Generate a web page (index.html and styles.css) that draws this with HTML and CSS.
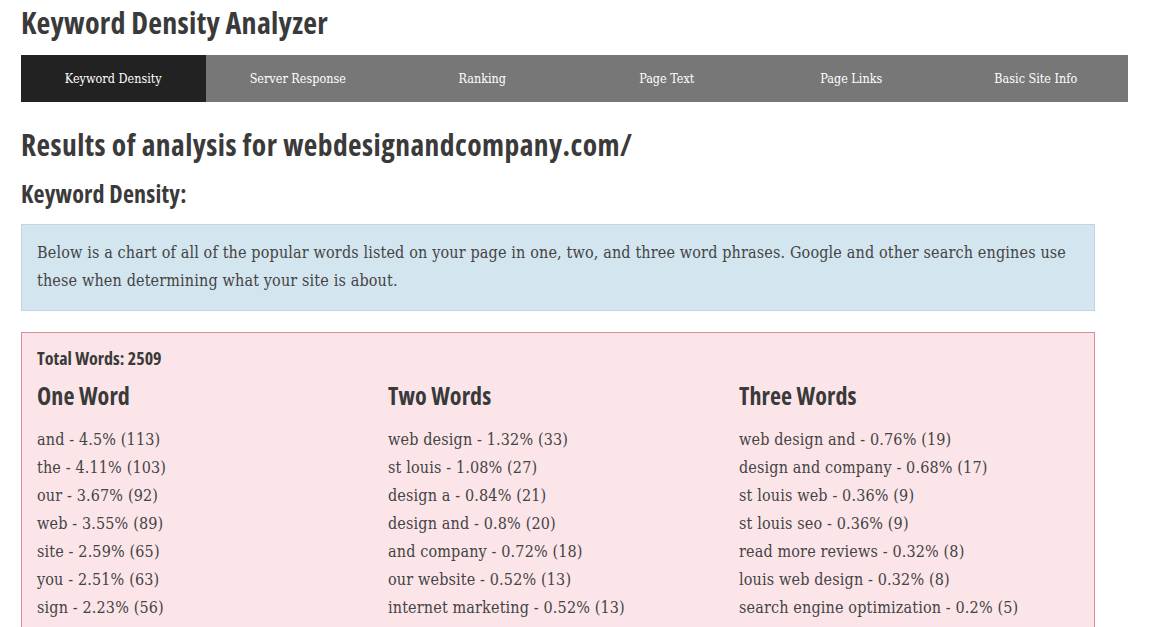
FILE: index.html
```html
<!DOCTYPE html>
<html>
<head>
<meta charset="utf-8">
<link rel="stylesheet" href="styles.css">
</head>
<body>
<div class="page">
  <h1 class="title">Keyword Density Analyzer</h1>
  <nav class="tabs">
    <a class="tab active">Keyword Density</a>
    <a class="tab">Server Response</a>
    <a class="tab">Ranking</a>
    <a class="tab">Page Text</a>
    <a class="tab">Page Links</a>
    <a class="tab">Basic Site Info</a>
  </nav>
  <h2 class="results">Results of analysis for webdesignandcompany.com/</h2>
  <h3 class="sub">Keyword Density:</h3>
  <div class="info">Below is a chart of all of the popular words listed on your page in one, two, and three word phrases. Google and other search engines use these when determining what your site is about.</div>
  <div class="danger">
    <div class="total">Total Words: 2509</div>
    <div class="cols">
      <div class="col">
        <h4 class="colhead">One Word</h4>
        <ul class="list">
          <li>and - 4.5% (113)</li>
          <li>the - 4.11% (103)</li>
          <li>our - 3.67% (92)</li>
          <li>web - 3.55% (89)</li>
          <li>site - 2.59% (65)</li>
          <li>you - 2.51% (63)</li>
          <li>sign - 2.23% (56)</li>
        </ul>
      </div>
      <div class="col">
        <h4 class="colhead">Two Words</h4>
        <ul class="list">
          <li>web design - 1.32% (33)</li>
          <li>st louis - 1.08% (27)</li>
          <li>design a - 0.84% (21)</li>
          <li>design and - 0.8% (20)</li>
          <li>and company - 0.72% (18)</li>
          <li>our website - 0.52% (13)</li>
          <li>internet marketing - 0.52% (13)</li>
        </ul>
      </div>
      <div class="col">
        <h4 class="colhead">Three Words</h4>
        <ul class="list">
          <li>web design and - 0.76% (19)</li>
          <li>design and company - 0.68% (17)</li>
          <li>st louis web - 0.36% (9)</li>
          <li>st louis seo - 0.36% (9)</li>
          <li>read more reviews - 0.32% (8)</li>
          <li>louis web design - 0.32% (8)</li>
          <li>search engine optimization - 0.2% (5)</li>
        </ul>
      </div>
    </div>
  </div>
</div>
</body>
</html>
```
FILE: styles.css
```css
html, body {
  margin: 0;
  padding: 0;
  background: #fff;
}
body {
  font-family: "DejaVu Serif", "Liberation Serif", serif;
  font-stretch: 87.5%;
  color: #444;
}
.page {
  padding: 0 22px 0 21px;
}
.title, .results, .sub, .total, .colhead {
  font-family: "Open Sans", "DejaVu Sans Condensed", sans-serif;
  font-stretch: 75%;
  font-weight: 700;
  color: #3a3a3a;
  margin: 0;
}
.title {
  font-size: 30px;
  line-height: 34px;
  padding-top: 6px;
  letter-spacing: 0.25px;
}
.tabs {
  display: grid;
  grid-template-columns: repeat(6, 1fr);
  margin-top: 15px;
  background: #777;
  height: 47px;
}
.tab {
  display: flex;
  align-items: center;
  justify-content: center;
  color: #fff;
  font-size: 12.5px;
}
.tab.active {
  background: #222;
}
.results {
  font-size: 29.5px;
  line-height: 34px;
  margin-top: 26px;
  letter-spacing: 0.45px;
}
.sub {
  font-size: 24px;
  line-height: 28px;
  margin-top: 18px;
  letter-spacing: 0.2px;
}
.info {
  margin-top: 16px;
  width: 1042px;
  background: #d3e5ef;
  border: 1px solid #bdd6e4;
  padding: 14px 15px 15px;
  font-size: 16px;
  line-height: 28px;
  letter-spacing: 0.15px;
  color: #444;
}
.danger {
  margin-top: 21px;
  width: 1042px;
  background: #fbe5e9;
  border: 1px solid #d48e9c;
  padding: 10px 15px 15px;
}
.total {
  font-size: 18px;
  line-height: 30px;
}
.cols {
  display: grid;
  grid-template-columns: repeat(3, 351px);
}
.colhead {
  font-size: 24px;
  line-height: 32px;
  margin-top: 7px;
  letter-spacing: 0.1px;
}
.list {
  list-style: none;
  margin: 14px 0 0;
  padding: 0;
  font-size: 16px;
  line-height: 28px;
  letter-spacing: 0.15px;
  color: #444;
}
```
